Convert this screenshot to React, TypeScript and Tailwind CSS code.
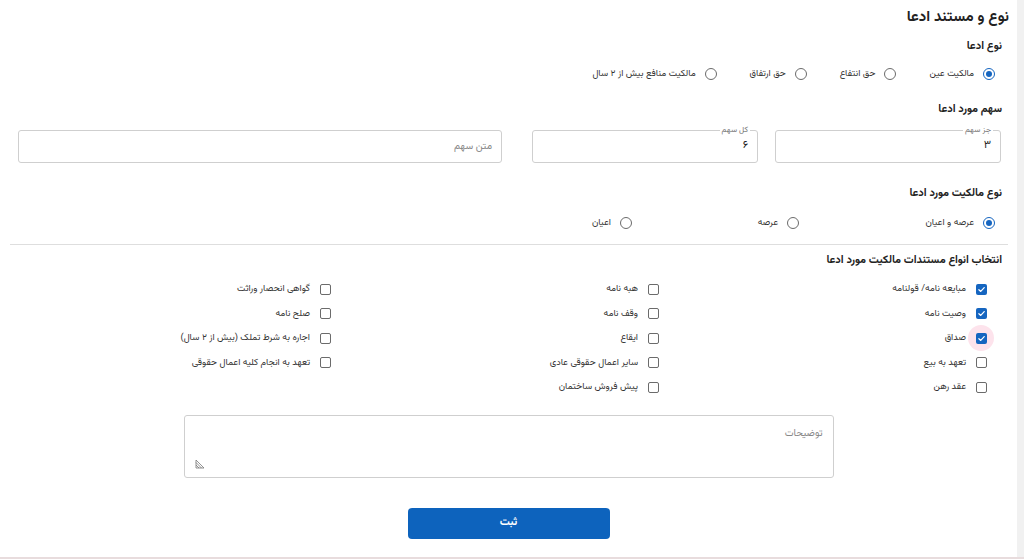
import React from "react";

const font = {
  fontFamily: '"Vazirmatn", "Noto Sans Arabic", "DejaVu Sans", sans-serif',
};

type RadioProps = { label: string; checked?: boolean; className?: string };

const Radio = ({ label, checked, className }: RadioProps) => (
  <div className={`flex items-center gap-[9px] h-4 ${className ?? ""}`}>
    <span
      className={`flex items-center justify-center w-3 h-3 rounded-full border-[1.5px] ${
        checked ? "border-[#1565c0]" : "border-[#6b6b6b]"
      }`}
    >
      {checked && <span className="w-[6px] h-[6px] rounded-full bg-[#1565c0]" />}
    </span>
    <span className="text-[9.3px] text-[#333]">{label}</span>
  </div>
);

type CheckProps = { label?: string; checked?: boolean; halo?: boolean };

const Check = ({ label, checked, halo }: CheckProps) => (
  <div className="flex items-center gap-[9px] h-[24.5px]">
    <span className="relative flex items-center justify-center w-3 h-3">
      {halo && (
        <span className="absolute -inset-[7px] rounded-full bg-[#fde3ec]" />
      )}
      {checked ? (
        <span className="relative flex items-center justify-center w-[11px] h-[11px] rounded-[2px] bg-[#1565c0]">
          <svg viewBox="0 0 12 12" className="w-[9px] h-[9px]">
            <path
              d="M2.5 6.3 L5 8.6 L9.6 3.4"
              fill="none"
              stroke="white"
              strokeWidth="1.6"
              strokeLinecap="round"
              strokeLinejoin="round"
            />
          </svg>
        </span>
      ) : (
        <span className="relative w-[11px] h-[11px] rounded-[2px] border-[1.5px] border-[#6b6b6b] bg-white" />
      )}
    </span>
    {label && <span className="text-[9.3px] text-[#333]">{label}</span>}
  </div>
);

type FieldProps = { label?: string; value?: string; placeholder?: string; className?: string };

const Field = ({ label, value, placeholder, className }: FieldProps) => (
  <div
    className={`relative h-[33px] border border-[#cfcfcf] rounded-[3px] flex items-center px-[9px] ${
      className ?? ""
    }`}
  >
    {label && (
      <span className="absolute -top-[6px] right-[7px] bg-white px-[2px] text-[8px] leading-[10px] text-[#777]">
        {label}
      </span>
    )}
    {value ? (
      <span className="text-[11px] text-[#222]">{value}</span>
    ) : (
      <span className="text-[10px] text-[#888]">{placeholder}</span>
    )}
  </div>
);

const col1 = [
  { label: "مبایعه نامه/ قولنامه", checked: true },
  { label: "وصیت نامه", checked: true },
  { label: "صداق", checked: true, halo: true },
  { label: "تعهد به بیع" },
  { label: "عقد رهن" },
];
const col2 = [
  { label: "هبه نامه" },
  { label: "وقف نامه" },
  { label: "ایقاع" },
  { label: "سایر اعمال حقوقی عادی" },
  { label: "پیش فروش ساختمان" },
];
const col3 = [
  { label: "گواهی انحصار وراثت" },
  { label: "صلح نامه" },
  { label: "اجاره به شرط تملک (بیش از ۲ سال)" },
  { label: "تعهد به انجام کلیه اعمال حقوقی" },
];

export default function App() {
  return (
    <div
      className="w-[1024px] h-[559px] flex flex-col bg-white overflow-hidden"
      style={font}
    >
      <div className="flex flex-1">
        <div dir="rtl" className="w-[1017px] flex flex-col">
          <h1 className="mt-[8px] pr-[8px] h-5 leading-5 text-[15px] font-bold text-[#222]">
            نوع و مستند ادعا
          </h1>

          <h2 className="mt-[11px] pr-[15px] h-4 leading-4 text-[11px] font-bold text-[#222]">
            نوع ادعا
          </h2>
          <div className="mt-[11px] pr-[22px] flex gap-[33px]">
            <Radio label="مالکیت عین" checked />
            <Radio label="حق انتفاع" />
            <Radio label="حق ارتفاق" />
            <Radio label="مالکیت منافع بیش از ۲ سال" />
          </div>

          <h2 className="mt-[20px] pr-[15px] h-4 leading-4 text-[11px] font-bold text-[#222]">
            سهم مورد ادعا
          </h2>
          <div className="mt-[12px] pr-[16px] flex">
            <Field label="جز سهم" value="۳" className="w-[226px]" />
            <Field label="کل سهم" value="۶" className="w-[226px] mr-[17px]" />
            <Field placeholder="متن سهم" className="w-[484px] mr-[30px]" />
          </div>

          <h2 className="mt-[23px] pr-[15px] h-4 leading-4 text-[11px] font-bold text-[#222]">
            نوع مالکیت مورد ادعا
          </h2>
          <div className="mt-[13px] pr-[22px] flex">
            <Radio label="عرصه و اعیان" checked className="w-[196px]" />
            <Radio label="عرصه" className="w-[167px]" />
            <Radio label="اعیان" />
          </div>

          <div className="mt-[13px] mr-[9px] ml-[10px] h-px bg-[#dedede]" />

          <h2 className="mt-[8px] pr-[15px] h-4 leading-4 text-[11px] font-bold text-[#222]">
            انتخاب انواع مستندات مالکیت مورد ادعا
          </h2>
          <div className="mt-[8px] pr-[30px] grid grid-cols-[328px_328px_328px]">
            <div className="flex flex-col">
              {col1.map((c) => (
                <Check key={c.label} {...c} />
              ))}
            </div>
            <div className="flex flex-col">
              {col2.map((c) => (
                <Check key={c.label} {...c} />
              ))}
            </div>
            <div className="flex flex-col">
              {col3.map((c) => (
                <Check key={c.label} {...c} />
              ))}
            </div>
          </div>

          <div className="mt-[15px] mx-auto w-[650px] h-[63px] border border-[#cfcfcf] rounded-[3px] flex flex-col justify-between pt-[10px] pb-[8px] px-[10px]">
            <span className="text-[10px] text-[#888]">توضیحات</span>
            <svg viewBox="0 0 10 10" className="w-[10px] h-[10px] self-end">
              <path
                d="M1 1 L9 9 M1 3.5 L6.5 9 M1 6 L4 9 M1 1 L1 9 L9 9"
                stroke="#777"
                strokeWidth="0.8"
                fill="none"
              />
            </svg>
          </div>

          <button className="mt-[30px] mx-auto w-[202px] h-[31px] rounded-[4px] bg-[#0d63bd] text-white text-[11px] font-bold">
            ثبت
          </button>
        </div>
        <div className="flex-1 bg-[#f1f1f1]" />
      </div>
      <div className="h-[2px] bg-[#e8dcdd]" />
    </div>
  );
}
